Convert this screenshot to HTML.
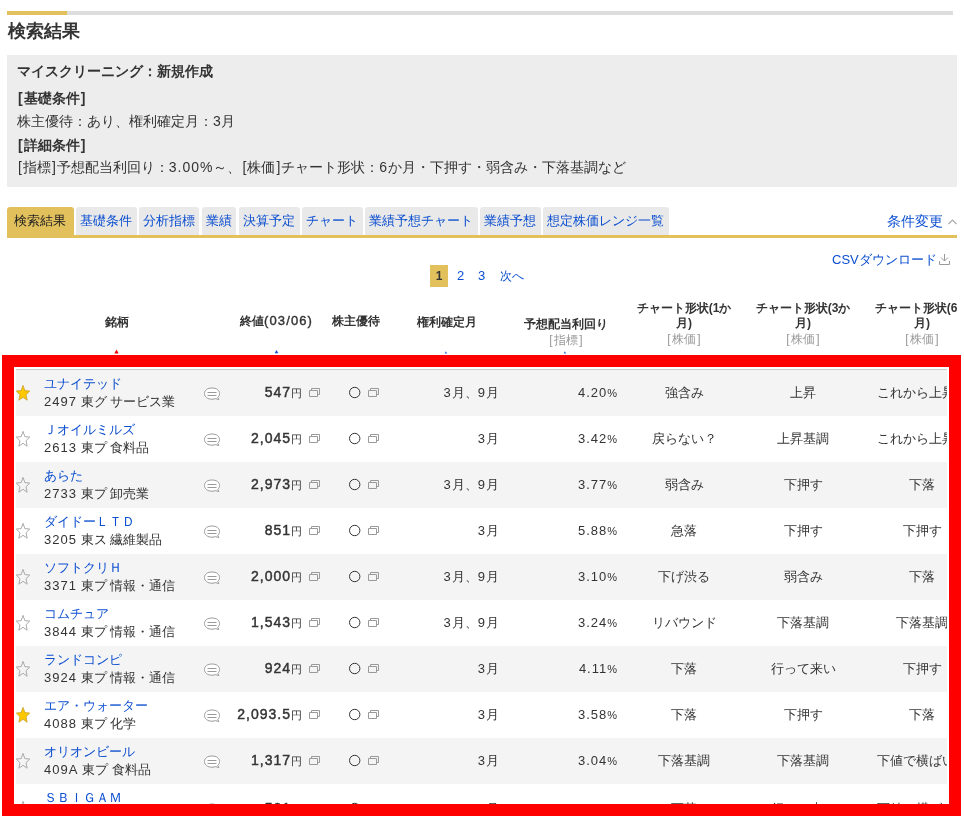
<!DOCTYPE html>
<html><head><meta charset="utf-8">
<style>
*{box-sizing:border-box;margin:0;padding:0}
html,body{width:964px;height:818px;overflow:hidden;background:#fff}
body{will-change:transform}
body{position:relative;font-family:"Liberation Sans",sans-serif;color:#333;font-size:13px}
.a{position:absolute;white-space:nowrap}
.bar{left:7px;top:11px;width:946px;height:4px;background:#ddd}
.bar i{position:absolute;left:0;top:0;width:60px;height:4px;background:#e2c05c}
.ttl{left:8px;top:18px;font-size:18px;font-weight:bold;line-height:26px;color:#333}
.box{left:7px;top:55px;width:950px;height:132px;background:#ededed}
.box div{position:absolute;left:10px;font-size:14px;line-height:20px;white-space:nowrap}
.b{font-weight:bold}
.tab{top:207px;height:28px;background:#e9e9e9;border-radius:3px 3px 0 0;color:#0c4fd0;font-size:13px;line-height:28px;padding:0 4px}
.tab.on{background:#e2c05c;color:#222}
.gl{left:7px;top:235px;width:950px;height:3px;background:#e2c05c}
.lk{color:#0c4fd0}
.hd{font-size:12px;font-weight:bold;line-height:15px;text-align:center;color:#333}
.sub{font-weight:normal;color:#999;display:inline-block;margin-top:1px;letter-spacing:0.2px}
.row{left:16px;width:931px;height:46px}
.row.g{background:#f4f4f4}
.row .a{line-height:16px}
.n{letter-spacing:1px}
.br{padding:0 1px}
.pb{font-size:14px;letter-spacing:1px;font-weight:normal;-webkit-text-stroke:0.45px #333}
.yen{font-size:11px}
.pct{font-size:11px}
.clip{left:0;top:0;height:818px;overflow:hidden}
</style></head><body>
<div class="a bar"><i></i></div>
<div class="a ttl">検索結果</div>
<div class="a box">
  <div class="b" style="top:6px">マイスクリーニング：新規作成</div>
  <div class="b" style="top:33px"><span class="br">[</span>基礎条件<span class="br">]</span></div>
  <div style="top:56px">株主優待：あり、権利確定月：3月</div>
  <div class="b" style="top:80px"><span class="br">[</span>詳細条件<span class="br">]</span></div>
  <div style="top:102px"><span class="br">[</span>指標<span class="br">]</span>予想配当利回り：<span class="n">3.00%</span>～、<span class="br">[</span>株価<span class="br">]</span>チャート形状：<span class="n">6</span>か月・下押す・弱含み・下落基調など</div>
</div>

<div class="a tab on" style="left:7px;width:67px;padding-left:7px">検索結果</div>
<div class="a tab" style="left:76px;width:61px">基礎条件</div>
<div class="a tab" style="left:139px;width:60px">分析指標</div>
<div class="a tab" style="left:202px;width:34px">業績</div>
<div class="a tab" style="left:239px;width:61px">決算予定</div>
<div class="a tab" style="left:302px;width:61px">チャート</div>
<div class="a tab" style="left:365px;width:113px">業績予想チャート</div>
<div class="a tab" style="left:480px;width:61px">業績予想</div>
<div class="a tab" style="left:543px;width:126px">想定株価レンジ一覧</div>
<div class="a gl"></div>
<div class="a lk" style="left:887px;top:212px;font-size:14px;line-height:18px">条件変更</div>
<svg class="a" style="left:946px;top:216px" width="12" height="10" viewBox="0 0 12 10"><path d="M2.5 8 L6.5 4 L10.5 8" fill="none" stroke="#aaa" stroke-width="1.2"/></svg>

<div class="a lk" style="left:832px;top:251px;font-size:13px;line-height:18px">CSVダウンロード</div>
<svg class="a" style="left:938px;top:253px" width="13" height="13" viewBox="0 0 13 13"><path d="M6.5 1 V8 M3 4.5 L6.5 8 L10 4.5 M1.5 8 V11.5 H11.5 V8" fill="none" stroke="#999" stroke-width="1"/></svg>

<div class="a" style="left:430px;top:265px;width:18px;height:22px;background:#e2c05c"></div>
<div class="a" style="left:430px;top:267px;width:18px;text-align:center;font-size:12px;font-weight:bold;line-height:18px;color:#333">1</div>
<div class="a lk" style="left:457px;top:266px;font-size:13px;line-height:19px">2</div>
<div class="a lk" style="left:478px;top:266px;font-size:13px;line-height:19px">3</div>
<div class="a lk" style="left:500px;top:267px;font-size:12px;line-height:18px">次へ</div>

<div class="a clip" style="width:957px">
<!-- header -->
<div class="a hd" style="left:87px;width:60px;top:315px">銘柄</div>
<div class="a hd" style="left:226px;width:100px;top:313px">終値<span style="font-size:13px;font-weight:normal;-webkit-text-stroke:0.4px #333;letter-spacing:1.1px">(03/06</span><span style="font-size:13px;font-weight:normal;-webkit-text-stroke:0.4px #333">)</span></div>
<div class="a hd" style="left:326px;width:60px;top:314px">株主優待</div>
<div class="a hd" style="left:407px;width:80px;top:315px">権利確定月</div>
<div class="a hd" style="left:516px;width:100px;top:317px">予想配当利回り<br><span class="sub"><span class="br">[</span>指標<span class="br">]</span></span></div>
<div class="a hd" style="left:624px;width:120px;top:301px">チャート形状(1か<br>月)<br><span class="sub"><span class="br">[</span>株価<span class="br">]</span></span></div>
<div class="a hd" style="left:743px;width:120px;top:301px">チャート形状(3か<br>月)<br><span class="sub"><span class="br">[</span>株価<span class="br">]</span></span></div>
<div class="a hd" style="left:862px;width:120px;top:301px">チャート形状(6か<br>月)<br><span class="sub"><span class="br">[</span>株価<span class="br">]</span></span></div>
<div class="a" style="left:16px;top:369px;width:931px;height:1px;background:#ccc"></div>
<svg class="a" style="left:114px;top:349px" width="5" height="5" viewBox="0 0 5 5"><path d="M2.5 0.6 L4.6 4.5 H0.4 Z" fill="#e00"/></svg>
<svg class="a" style="left:274px;top:349px" width="5" height="5" viewBox="0 0 5 5"><path d="M2.5 1 L4.3 4.2 H0.7 Z" fill="#1a4fd0"/></svg>
<svg class="a" style="left:444px;top:350px" width="4" height="4" viewBox="0 0 4 4"><path d="M1.8 1.2 L3.2 3.4 H0.6 Z" fill="#3a6ad8"/></svg>
<svg class="a" style="left:563px;top:350px" width="4" height="4" viewBox="0 0 4 4"><path d="M1.8 1.2 L3.2 3.4 H0.6 Z" fill="#3a6ad8"/></svg>

</div>
<div class="a clip" style="width:947px;height:816px">
<div id="rows"><div class="a row g" style="top:370px"><div class="a lk" style="left:28px;top:6px">ユナイテッド</div><div class="a" style="left:0;top:0px;width:931px;height:46px"><svg class="a" style="left:0px;top:15px" width="16" height="17" viewBox="0 0 16 17"><path d="M7.00 0.40 L8.87 5.61 L13.71 6.07 L10.03 9.74 L11.15 15.23 L7.00 12.30 L2.85 15.23 L3.97 9.74 L0.29 6.07 L5.13 5.61 Z" fill="#ffc800" stroke="#c9a02a" stroke-width="0.8" stroke-linejoin="round"/></svg><div class="a" style="left:28px;top:24px"><span class="n">2497</span> 東グ サービス業</div><svg class="a" style="left:187px;top:17px" width="18" height="14" viewBox="0 0 18 14"><path d="M9 1 C13.5 1 16.5 3.2 16.5 6.5 C16.5 8.2 15.8 9.4 14.8 10.3 L15.8 12.6 L12.6 11.6 C11.6 12 10.4 12.2 9 12.2 C4.5 12.2 1.5 9.8 1.5 6.5 C1.5 3.2 4.5 1 9 1 Z" fill="#fff" stroke="#999" stroke-width="1"/><path d="M4.5 5.5 H13.5 M4.5 8.5 H13.5" stroke="#999" stroke-width="1"/></svg><div class="a pr" style="right:645px;top:14px"><b class="pb">547</b><span class="yen">円</span></div><svg class="a" style="left:292px;top:17px" width="12" height="11" viewBox="0 0 12 11"><path d="M3.5 3.5 V1.5 H11.5 V7.5 H9.5 M1.5 3.5 H9.5 V9.5 H1.5 Z" fill="none" stroke="#9a9a9a" stroke-width="1"/></svg><svg class="a" style="left:332px;top:16px" width="13" height="13" viewBox="0 0 13 13"><circle cx="6.7" cy="6.5" r="5.2" fill="none" stroke="#333" stroke-width="1"/></svg><svg class="a" style="left:351px;top:17px" width="12" height="11" viewBox="0 0 12 11"><path d="M3.5 3.5 V1.5 H11.5 V7.5 H9.5 M1.5 3.5 H9.5 V9.5 H1.5 Z" fill="none" stroke="#9a9a9a" stroke-width="1"/></svg><div class="a" style="right:448px;top:15px"><span class="n">3</span>月、<span class="n">9</span>月</div><div class="a" style="right:330px;top:15px"><span class="n">4.20</span><span class="pct">%</span></div><div class="a" style="left:608px;width:120px;text-align:center;top:15px">強含み</div><div class="a" style="left:727px;width:120px;text-align:center;top:15px">上昇</div><div class="a" style="left:861px;top:15px">これから上昇</div></div></div><div class="a row" style="top:416px"><div class="a lk" style="left:28px;top:6px">Ｊオイルミルズ</div><div class="a" style="left:0;top:0px;width:931px;height:46px"><svg class="a" style="left:0px;top:15px" width="16" height="17" viewBox="0 0 16 17"><path d="M7.00 0.40 L8.87 5.61 L13.71 6.07 L10.03 9.74 L11.15 15.23 L7.00 12.30 L2.85 15.23 L3.97 9.74 L0.29 6.07 L5.13 5.61 Z" fill="none" stroke="#aaa" stroke-width="1" stroke-linejoin="round"/></svg><div class="a" style="left:28px;top:24px"><span class="n">2613</span> 東プ 食料品</div><svg class="a" style="left:187px;top:17px" width="18" height="14" viewBox="0 0 18 14"><path d="M9 1 C13.5 1 16.5 3.2 16.5 6.5 C16.5 8.2 15.8 9.4 14.8 10.3 L15.8 12.6 L12.6 11.6 C11.6 12 10.4 12.2 9 12.2 C4.5 12.2 1.5 9.8 1.5 6.5 C1.5 3.2 4.5 1 9 1 Z" fill="#fff" stroke="#999" stroke-width="1"/><path d="M4.5 5.5 H13.5 M4.5 8.5 H13.5" stroke="#999" stroke-width="1"/></svg><div class="a pr" style="right:645px;top:14px"><b class="pb">2,045</b><span class="yen">円</span></div><svg class="a" style="left:292px;top:17px" width="12" height="11" viewBox="0 0 12 11"><path d="M3.5 3.5 V1.5 H11.5 V7.5 H9.5 M1.5 3.5 H9.5 V9.5 H1.5 Z" fill="none" stroke="#9a9a9a" stroke-width="1"/></svg><svg class="a" style="left:332px;top:16px" width="13" height="13" viewBox="0 0 13 13"><circle cx="6.7" cy="6.5" r="5.2" fill="none" stroke="#333" stroke-width="1"/></svg><svg class="a" style="left:351px;top:17px" width="12" height="11" viewBox="0 0 12 11"><path d="M3.5 3.5 V1.5 H11.5 V7.5 H9.5 M1.5 3.5 H9.5 V9.5 H1.5 Z" fill="none" stroke="#9a9a9a" stroke-width="1"/></svg><div class="a" style="right:448px;top:15px"><span class="n">3</span>月</div><div class="a" style="right:330px;top:15px"><span class="n">3.42</span><span class="pct">%</span></div><div class="a" style="left:608px;width:120px;text-align:center;top:15px">戻らない？</div><div class="a" style="left:727px;width:120px;text-align:center;top:15px">上昇基調</div><div class="a" style="left:861px;top:15px">これから上昇</div></div></div><div class="a row g" style="top:462px"><div class="a lk" style="left:28px;top:6px">あらた</div><div class="a" style="left:0;top:0px;width:931px;height:46px"><svg class="a" style="left:0px;top:15px" width="16" height="17" viewBox="0 0 16 17"><path d="M7.00 0.40 L8.87 5.61 L13.71 6.07 L10.03 9.74 L11.15 15.23 L7.00 12.30 L2.85 15.23 L3.97 9.74 L0.29 6.07 L5.13 5.61 Z" fill="none" stroke="#aaa" stroke-width="1" stroke-linejoin="round"/></svg><div class="a" style="left:28px;top:24px"><span class="n">2733</span> 東プ 卸売業</div><svg class="a" style="left:187px;top:17px" width="18" height="14" viewBox="0 0 18 14"><path d="M9 1 C13.5 1 16.5 3.2 16.5 6.5 C16.5 8.2 15.8 9.4 14.8 10.3 L15.8 12.6 L12.6 11.6 C11.6 12 10.4 12.2 9 12.2 C4.5 12.2 1.5 9.8 1.5 6.5 C1.5 3.2 4.5 1 9 1 Z" fill="#fff" stroke="#999" stroke-width="1"/><path d="M4.5 5.5 H13.5 M4.5 8.5 H13.5" stroke="#999" stroke-width="1"/></svg><div class="a pr" style="right:645px;top:14px"><b class="pb">2,973</b><span class="yen">円</span></div><svg class="a" style="left:292px;top:17px" width="12" height="11" viewBox="0 0 12 11"><path d="M3.5 3.5 V1.5 H11.5 V7.5 H9.5 M1.5 3.5 H9.5 V9.5 H1.5 Z" fill="none" stroke="#9a9a9a" stroke-width="1"/></svg><svg class="a" style="left:332px;top:16px" width="13" height="13" viewBox="0 0 13 13"><circle cx="6.7" cy="6.5" r="5.2" fill="none" stroke="#333" stroke-width="1"/></svg><svg class="a" style="left:351px;top:17px" width="12" height="11" viewBox="0 0 12 11"><path d="M3.5 3.5 V1.5 H11.5 V7.5 H9.5 M1.5 3.5 H9.5 V9.5 H1.5 Z" fill="none" stroke="#9a9a9a" stroke-width="1"/></svg><div class="a" style="right:448px;top:15px"><span class="n">3</span>月、<span class="n">9</span>月</div><div class="a" style="right:330px;top:15px"><span class="n">3.77</span><span class="pct">%</span></div><div class="a" style="left:608px;width:120px;text-align:center;top:15px">弱含み</div><div class="a" style="left:727px;width:120px;text-align:center;top:15px">下押す</div><div class="a" style="left:846px;width:120px;text-align:center;top:15px">下落</div></div></div><div class="a row" style="top:508px"><div class="a lk" style="left:28px;top:6px">ダイドーＬＴＤ</div><div class="a" style="left:0;top:0px;width:931px;height:46px"><svg class="a" style="left:0px;top:15px" width="16" height="17" viewBox="0 0 16 17"><path d="M7.00 0.40 L8.87 5.61 L13.71 6.07 L10.03 9.74 L11.15 15.23 L7.00 12.30 L2.85 15.23 L3.97 9.74 L0.29 6.07 L5.13 5.61 Z" fill="none" stroke="#aaa" stroke-width="1" stroke-linejoin="round"/></svg><div class="a" style="left:28px;top:24px"><span class="n">3205</span> 東ス 繊維製品</div><svg class="a" style="left:187px;top:17px" width="18" height="14" viewBox="0 0 18 14"><path d="M9 1 C13.5 1 16.5 3.2 16.5 6.5 C16.5 8.2 15.8 9.4 14.8 10.3 L15.8 12.6 L12.6 11.6 C11.6 12 10.4 12.2 9 12.2 C4.5 12.2 1.5 9.8 1.5 6.5 C1.5 3.2 4.5 1 9 1 Z" fill="#fff" stroke="#999" stroke-width="1"/><path d="M4.5 5.5 H13.5 M4.5 8.5 H13.5" stroke="#999" stroke-width="1"/></svg><div class="a pr" style="right:645px;top:14px"><b class="pb">851</b><span class="yen">円</span></div><svg class="a" style="left:292px;top:17px" width="12" height="11" viewBox="0 0 12 11"><path d="M3.5 3.5 V1.5 H11.5 V7.5 H9.5 M1.5 3.5 H9.5 V9.5 H1.5 Z" fill="none" stroke="#9a9a9a" stroke-width="1"/></svg><svg class="a" style="left:332px;top:16px" width="13" height="13" viewBox="0 0 13 13"><circle cx="6.7" cy="6.5" r="5.2" fill="none" stroke="#333" stroke-width="1"/></svg><svg class="a" style="left:351px;top:17px" width="12" height="11" viewBox="0 0 12 11"><path d="M3.5 3.5 V1.5 H11.5 V7.5 H9.5 M1.5 3.5 H9.5 V9.5 H1.5 Z" fill="none" stroke="#9a9a9a" stroke-width="1"/></svg><div class="a" style="right:448px;top:15px"><span class="n">3</span>月</div><div class="a" style="right:330px;top:15px"><span class="n">5.88</span><span class="pct">%</span></div><div class="a" style="left:608px;width:120px;text-align:center;top:15px">急落</div><div class="a" style="left:727px;width:120px;text-align:center;top:15px">下押す</div><div class="a" style="left:846px;width:120px;text-align:center;top:15px">下押す</div></div></div><div class="a row g" style="top:554px"><div class="a lk" style="left:28px;top:6px">ソフトクリＨ</div><div class="a" style="left:0;top:0px;width:931px;height:46px"><svg class="a" style="left:0px;top:15px" width="16" height="17" viewBox="0 0 16 17"><path d="M7.00 0.40 L8.87 5.61 L13.71 6.07 L10.03 9.74 L11.15 15.23 L7.00 12.30 L2.85 15.23 L3.97 9.74 L0.29 6.07 L5.13 5.61 Z" fill="none" stroke="#aaa" stroke-width="1" stroke-linejoin="round"/></svg><div class="a" style="left:28px;top:24px"><span class="n">3371</span> 東プ 情報・通信</div><svg class="a" style="left:187px;top:17px" width="18" height="14" viewBox="0 0 18 14"><path d="M9 1 C13.5 1 16.5 3.2 16.5 6.5 C16.5 8.2 15.8 9.4 14.8 10.3 L15.8 12.6 L12.6 11.6 C11.6 12 10.4 12.2 9 12.2 C4.5 12.2 1.5 9.8 1.5 6.5 C1.5 3.2 4.5 1 9 1 Z" fill="#fff" stroke="#999" stroke-width="1"/><path d="M4.5 5.5 H13.5 M4.5 8.5 H13.5" stroke="#999" stroke-width="1"/></svg><div class="a pr" style="right:645px;top:14px"><b class="pb">2,000</b><span class="yen">円</span></div><svg class="a" style="left:292px;top:17px" width="12" height="11" viewBox="0 0 12 11"><path d="M3.5 3.5 V1.5 H11.5 V7.5 H9.5 M1.5 3.5 H9.5 V9.5 H1.5 Z" fill="none" stroke="#9a9a9a" stroke-width="1"/></svg><svg class="a" style="left:332px;top:16px" width="13" height="13" viewBox="0 0 13 13"><circle cx="6.7" cy="6.5" r="5.2" fill="none" stroke="#333" stroke-width="1"/></svg><svg class="a" style="left:351px;top:17px" width="12" height="11" viewBox="0 0 12 11"><path d="M3.5 3.5 V1.5 H11.5 V7.5 H9.5 M1.5 3.5 H9.5 V9.5 H1.5 Z" fill="none" stroke="#9a9a9a" stroke-width="1"/></svg><div class="a" style="right:448px;top:15px"><span class="n">3</span>月、<span class="n">9</span>月</div><div class="a" style="right:330px;top:15px"><span class="n">3.10</span><span class="pct">%</span></div><div class="a" style="left:608px;width:120px;text-align:center;top:15px">下げ渋る</div><div class="a" style="left:727px;width:120px;text-align:center;top:15px">弱含み</div><div class="a" style="left:846px;width:120px;text-align:center;top:15px">下落</div></div></div><div class="a row" style="top:600px"><div class="a lk" style="left:28px;top:6px">コムチュア</div><div class="a" style="left:0;top:0px;width:931px;height:46px"><svg class="a" style="left:0px;top:15px" width="16" height="17" viewBox="0 0 16 17"><path d="M7.00 0.40 L8.87 5.61 L13.71 6.07 L10.03 9.74 L11.15 15.23 L7.00 12.30 L2.85 15.23 L3.97 9.74 L0.29 6.07 L5.13 5.61 Z" fill="none" stroke="#aaa" stroke-width="1" stroke-linejoin="round"/></svg><div class="a" style="left:28px;top:24px"><span class="n">3844</span> 東プ 情報・通信</div><svg class="a" style="left:187px;top:17px" width="18" height="14" viewBox="0 0 18 14"><path d="M9 1 C13.5 1 16.5 3.2 16.5 6.5 C16.5 8.2 15.8 9.4 14.8 10.3 L15.8 12.6 L12.6 11.6 C11.6 12 10.4 12.2 9 12.2 C4.5 12.2 1.5 9.8 1.5 6.5 C1.5 3.2 4.5 1 9 1 Z" fill="#fff" stroke="#999" stroke-width="1"/><path d="M4.5 5.5 H13.5 M4.5 8.5 H13.5" stroke="#999" stroke-width="1"/></svg><div class="a pr" style="right:645px;top:14px"><b class="pb">1,543</b><span class="yen">円</span></div><svg class="a" style="left:292px;top:17px" width="12" height="11" viewBox="0 0 12 11"><path d="M3.5 3.5 V1.5 H11.5 V7.5 H9.5 M1.5 3.5 H9.5 V9.5 H1.5 Z" fill="none" stroke="#9a9a9a" stroke-width="1"/></svg><svg class="a" style="left:332px;top:16px" width="13" height="13" viewBox="0 0 13 13"><circle cx="6.7" cy="6.5" r="5.2" fill="none" stroke="#333" stroke-width="1"/></svg><svg class="a" style="left:351px;top:17px" width="12" height="11" viewBox="0 0 12 11"><path d="M3.5 3.5 V1.5 H11.5 V7.5 H9.5 M1.5 3.5 H9.5 V9.5 H1.5 Z" fill="none" stroke="#9a9a9a" stroke-width="1"/></svg><div class="a" style="right:448px;top:15px"><span class="n">3</span>月、<span class="n">9</span>月</div><div class="a" style="right:330px;top:15px"><span class="n">3.24</span><span class="pct">%</span></div><div class="a" style="left:608px;width:120px;text-align:center;top:15px">リバウンド</div><div class="a" style="left:727px;width:120px;text-align:center;top:15px">下落基調</div><div class="a" style="left:846px;width:120px;text-align:center;top:15px">下落基調</div></div></div><div class="a row g" style="top:646px"><div class="a lk" style="left:28px;top:6px">ランドコンピ</div><div class="a" style="left:0;top:0px;width:931px;height:46px"><svg class="a" style="left:0px;top:15px" width="16" height="17" viewBox="0 0 16 17"><path d="M7.00 0.40 L8.87 5.61 L13.71 6.07 L10.03 9.74 L11.15 15.23 L7.00 12.30 L2.85 15.23 L3.97 9.74 L0.29 6.07 L5.13 5.61 Z" fill="none" stroke="#aaa" stroke-width="1" stroke-linejoin="round"/></svg><div class="a" style="left:28px;top:24px"><span class="n">3924</span> 東プ 情報・通信</div><svg class="a" style="left:187px;top:17px" width="18" height="14" viewBox="0 0 18 14"><path d="M9 1 C13.5 1 16.5 3.2 16.5 6.5 C16.5 8.2 15.8 9.4 14.8 10.3 L15.8 12.6 L12.6 11.6 C11.6 12 10.4 12.2 9 12.2 C4.5 12.2 1.5 9.8 1.5 6.5 C1.5 3.2 4.5 1 9 1 Z" fill="#fff" stroke="#999" stroke-width="1"/><path d="M4.5 5.5 H13.5 M4.5 8.5 H13.5" stroke="#999" stroke-width="1"/></svg><div class="a pr" style="right:645px;top:14px"><b class="pb">924</b><span class="yen">円</span></div><svg class="a" style="left:292px;top:17px" width="12" height="11" viewBox="0 0 12 11"><path d="M3.5 3.5 V1.5 H11.5 V7.5 H9.5 M1.5 3.5 H9.5 V9.5 H1.5 Z" fill="none" stroke="#9a9a9a" stroke-width="1"/></svg><svg class="a" style="left:332px;top:16px" width="13" height="13" viewBox="0 0 13 13"><circle cx="6.7" cy="6.5" r="5.2" fill="none" stroke="#333" stroke-width="1"/></svg><svg class="a" style="left:351px;top:17px" width="12" height="11" viewBox="0 0 12 11"><path d="M3.5 3.5 V1.5 H11.5 V7.5 H9.5 M1.5 3.5 H9.5 V9.5 H1.5 Z" fill="none" stroke="#9a9a9a" stroke-width="1"/></svg><div class="a" style="right:448px;top:15px"><span class="n">3</span>月</div><div class="a" style="right:330px;top:15px"><span class="n">4.11</span><span class="pct">%</span></div><div class="a" style="left:608px;width:120px;text-align:center;top:15px">下落</div><div class="a" style="left:727px;width:120px;text-align:center;top:15px">行って来い</div><div class="a" style="left:846px;width:120px;text-align:center;top:15px">下押す</div></div></div><div class="a row" style="top:692px"><div class="a lk" style="left:28px;top:6px">エア・ウォーター</div><div class="a" style="left:0;top:0px;width:931px;height:46px"><svg class="a" style="left:0px;top:15px" width="16" height="17" viewBox="0 0 16 17"><path d="M7.00 0.40 L8.87 5.61 L13.71 6.07 L10.03 9.74 L11.15 15.23 L7.00 12.30 L2.85 15.23 L3.97 9.74 L0.29 6.07 L5.13 5.61 Z" fill="#ffc800" stroke="#c9a02a" stroke-width="0.8" stroke-linejoin="round"/></svg><div class="a" style="left:28px;top:24px"><span class="n">4088</span> 東プ 化学</div><svg class="a" style="left:187px;top:17px" width="18" height="14" viewBox="0 0 18 14"><path d="M9 1 C13.5 1 16.5 3.2 16.5 6.5 C16.5 8.2 15.8 9.4 14.8 10.3 L15.8 12.6 L12.6 11.6 C11.6 12 10.4 12.2 9 12.2 C4.5 12.2 1.5 9.8 1.5 6.5 C1.5 3.2 4.5 1 9 1 Z" fill="#fff" stroke="#999" stroke-width="1"/><path d="M4.5 5.5 H13.5 M4.5 8.5 H13.5" stroke="#999" stroke-width="1"/></svg><div class="a pr" style="right:645px;top:14px"><b class="pb">2,093.5</b><span class="yen">円</span></div><svg class="a" style="left:292px;top:17px" width="12" height="11" viewBox="0 0 12 11"><path d="M3.5 3.5 V1.5 H11.5 V7.5 H9.5 M1.5 3.5 H9.5 V9.5 H1.5 Z" fill="none" stroke="#9a9a9a" stroke-width="1"/></svg><svg class="a" style="left:332px;top:16px" width="13" height="13" viewBox="0 0 13 13"><circle cx="6.7" cy="6.5" r="5.2" fill="none" stroke="#333" stroke-width="1"/></svg><svg class="a" style="left:351px;top:17px" width="12" height="11" viewBox="0 0 12 11"><path d="M3.5 3.5 V1.5 H11.5 V7.5 H9.5 M1.5 3.5 H9.5 V9.5 H1.5 Z" fill="none" stroke="#9a9a9a" stroke-width="1"/></svg><div class="a" style="right:448px;top:15px"><span class="n">3</span>月</div><div class="a" style="right:330px;top:15px"><span class="n">3.58</span><span class="pct">%</span></div><div class="a" style="left:608px;width:120px;text-align:center;top:15px">下落</div><div class="a" style="left:727px;width:120px;text-align:center;top:15px">下押す</div><div class="a" style="left:846px;width:120px;text-align:center;top:15px">下落</div></div></div><div class="a row g" style="top:738px"><div class="a lk" style="left:28px;top:6px">オリオンビール</div><div class="a" style="left:0;top:0px;width:931px;height:46px"><svg class="a" style="left:0px;top:15px" width="16" height="17" viewBox="0 0 16 17"><path d="M7.00 0.40 L8.87 5.61 L13.71 6.07 L10.03 9.74 L11.15 15.23 L7.00 12.30 L2.85 15.23 L3.97 9.74 L0.29 6.07 L5.13 5.61 Z" fill="none" stroke="#aaa" stroke-width="1" stroke-linejoin="round"/></svg><div class="a" style="left:28px;top:24px"><span class="n">409A</span> 東プ 食料品</div><svg class="a" style="left:187px;top:17px" width="18" height="14" viewBox="0 0 18 14"><path d="M9 1 C13.5 1 16.5 3.2 16.5 6.5 C16.5 8.2 15.8 9.4 14.8 10.3 L15.8 12.6 L12.6 11.6 C11.6 12 10.4 12.2 9 12.2 C4.5 12.2 1.5 9.8 1.5 6.5 C1.5 3.2 4.5 1 9 1 Z" fill="#fff" stroke="#999" stroke-width="1"/><path d="M4.5 5.5 H13.5 M4.5 8.5 H13.5" stroke="#999" stroke-width="1"/></svg><div class="a pr" style="right:645px;top:14px"><b class="pb">1,317</b><span class="yen">円</span></div><svg class="a" style="left:292px;top:17px" width="12" height="11" viewBox="0 0 12 11"><path d="M3.5 3.5 V1.5 H11.5 V7.5 H9.5 M1.5 3.5 H9.5 V9.5 H1.5 Z" fill="none" stroke="#9a9a9a" stroke-width="1"/></svg><svg class="a" style="left:332px;top:16px" width="13" height="13" viewBox="0 0 13 13"><circle cx="6.7" cy="6.5" r="5.2" fill="none" stroke="#333" stroke-width="1"/></svg><svg class="a" style="left:351px;top:17px" width="12" height="11" viewBox="0 0 12 11"><path d="M3.5 3.5 V1.5 H11.5 V7.5 H9.5 M1.5 3.5 H9.5 V9.5 H1.5 Z" fill="none" stroke="#9a9a9a" stroke-width="1"/></svg><div class="a" style="right:448px;top:15px"><span class="n">3</span>月</div><div class="a" style="right:330px;top:15px"><span class="n">3.04</span><span class="pct">%</span></div><div class="a" style="left:608px;width:120px;text-align:center;top:15px">下落基調</div><div class="a" style="left:727px;width:120px;text-align:center;top:15px">下落基調</div><div class="a" style="left:861px;top:15px">下値で横ばい</div></div></div><div class="a row" style="top:784px"><div class="a lk" style="left:28px;top:6px">ＳＢＩＧＡＭ</div><div class="a" style="left:0;top:2px;width:931px;height:46px"><svg class="a" style="left:0px;top:15px" width="16" height="17" viewBox="0 0 16 17"><path d="M7.00 0.40 L8.87 5.61 L13.71 6.07 L10.03 9.74 L11.15 15.23 L7.00 12.30 L2.85 15.23 L3.97 9.74 L0.29 6.07 L5.13 5.61 Z" fill="none" stroke="#aaa" stroke-width="1" stroke-linejoin="round"/></svg><div class="a" style="left:28px;top:24px"><span class="n">4765</span> 東ス 証券業</div><svg class="a" style="left:187px;top:17px" width="18" height="14" viewBox="0 0 18 14"><path d="M9 1 C13.5 1 16.5 3.2 16.5 6.5 C16.5 8.2 15.8 9.4 14.8 10.3 L15.8 12.6 L12.6 11.6 C11.6 12 10.4 12.2 9 12.2 C4.5 12.2 1.5 9.8 1.5 6.5 C1.5 3.2 4.5 1 9 1 Z" fill="#fff" stroke="#999" stroke-width="1"/><path d="M4.5 5.5 H13.5 M4.5 8.5 H13.5" stroke="#999" stroke-width="1"/></svg><div class="a pr" style="right:645px;top:14px"><b class="pb">521</b><span class="yen">円</span></div><svg class="a" style="left:292px;top:17px" width="12" height="11" viewBox="0 0 12 11"><path d="M3.5 3.5 V1.5 H11.5 V7.5 H9.5 M1.5 3.5 H9.5 V9.5 H1.5 Z" fill="none" stroke="#9a9a9a" stroke-width="1"/></svg><svg class="a" style="left:332px;top:16px" width="13" height="13" viewBox="0 0 13 13"><circle cx="6.7" cy="6.5" r="5.2" fill="none" stroke="#333" stroke-width="1"/></svg><svg class="a" style="left:351px;top:17px" width="12" height="11" viewBox="0 0 12 11"><path d="M3.5 3.5 V1.5 H11.5 V7.5 H9.5 M1.5 3.5 H9.5 V9.5 H1.5 Z" fill="none" stroke="#9a9a9a" stroke-width="1"/></svg><div class="a" style="right:448px;top:15px"><span class="n">3</span>月</div><div class="a" style="right:330px;top:15px"><span class="n">3.64</span><span class="pct">%</span></div><div class="a" style="left:608px;width:120px;text-align:center;top:15px">下落</div><div class="a" style="left:727px;width:120px;text-align:center;top:15px">行って来い</div><div class="a" style="left:861px;top:15px">下値で横ばい</div></div></div></div>
</div>

<!-- red overlay -->
<div class="a" style="left:2px;top:355px;width:959px;height:461px;border:12px solid #ff0000"></div>
</body></html>
